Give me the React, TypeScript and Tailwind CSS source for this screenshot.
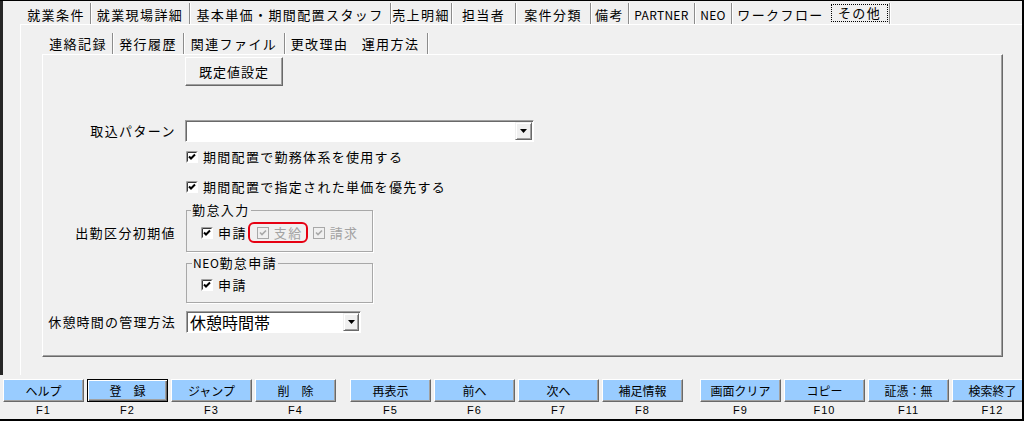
import React from 'react';

function CheckBox({ disabled = false }: { disabled?: boolean }) {
  if (disabled) {
    return (
      <svg width="12" height="12" viewBox="0 0 12 12" className="block shrink-0">
        <rect x="0.5" y="0.5" width="11" height="11" fill="#f0f0f0" stroke="#a8a8a8" />
        <path d="M3 5.5 L5 7.5 L9 3.5" fill="none" stroke="#a8a8a8" strokeWidth="1.6" />
      </svg>
    );
  }
  return (
    <svg width="12" height="12" viewBox="0 0 12 12" className="block shrink-0">
      <rect x="0" y="0" width="12" height="12" fill="#ffffff" />
      <path d="M0.5 11.5 H11.5 V0.5" fill="none" stroke="#ffffff" />
      <path d="M0.5 11.5 V0.5 H11.5" fill="none" stroke="#a0a0a0" />
      <path d="M1.5 10.5 V1.5 H10.5" fill="none" stroke="#3a3a3a" />
      <path d="M3 5.5 L5 7.5 L9 3.5" fill="none" stroke="#000000" strokeWidth="2" />
    </svg>
  );
}

function DropArrow({ w }: { w: string }) {
  return (
    <div
      className={`${w} h-full shrink-0 bg-[#f0f0f0] border border-t-[#f0f0f0] border-l-[#f0f0f0] border-r-[#696969] border-b-[#696969] shadow-[inset_1px_1px_0_#ffffff,inset_-1px_-1px_0_#a0a0a0] flex items-center justify-center`}
    >
      <svg width="7" height="4" viewBox="0 0 7 4" className="block">
        <polygon points="0,0 7,0 3.5,4" fill="#000000" />
      </svg>
    </div>
  );
}

const topTabs: { label: string; w: string; latin?: boolean; noSep?: boolean }[] = [
  { label: '就業条件', w: 'w-[69px]' },
  { label: '就業現場詳細', w: 'w-[99px]' },
  { label: '基本単価・期間配置スタッフ', w: 'w-[201px]' },
  { label: '売上明細', w: 'w-[61px]' },
  { label: '担当者', w: 'w-[64px]' },
  { label: '案件分類', w: 'w-[75px]' },
  { label: '備考', w: 'w-[38px]' },
  { label: 'PARTNER', w: 'w-[66px]', latin: true },
  { label: 'NEO', w: 'w-[37px]', latin: true },
  { label: 'ワークフロー', w: 'w-[97px]', noSep: true },
];

const innerTabs: { label: string; w: string; noSep?: boolean }[] = [
  { label: '連絡記録', w: 'w-[69px]' },
  { label: '発行履歴', w: 'w-[71px]' },
  { label: '関連ファイル', w: 'w-[101px]' },
  { label: '更改理由', w: 'w-[69px]', noSep: true },
  { label: '運用方法', w: 'w-[74px]' },
];

type Btn = { label: string; key: string; def?: boolean };
const groups: { ml: string; items: Btn[] }[] = [
  {
    ml: 'ml-0',
    items: [
      { label: 'ヘルプ', key: 'F1' },
      { label: '登　録', key: 'F2', def: true },
      { label: 'ジャンプ', key: 'F3' },
      { label: '削　除', key: 'F4' },
    ],
  },
  {
    ml: 'ml-[14px]',
    items: [
      { label: '再表示', key: 'F5' },
      { label: '前へ', key: 'F6' },
      { label: '次へ', key: 'F7' },
      { label: '補足情報', key: 'F8' },
    ],
  },
  {
    ml: 'ml-[17px]',
    items: [
      { label: '画面クリア', key: 'F9' },
      { label: 'コピー', key: 'F10' },
      { label: '証憑：無', key: 'F11' },
      { label: '検索終了', key: 'F12' },
    ],
  },
];

export default function App() {
  return (
    <div className="w-[1024px] h-[421px] overflow-hidden bg-[#f0f0f0] border-t border-r-2 border-b-2 border-black flex flex-col text-black font-['Noto_Sans_CJK_JP','Noto_Sans',sans-serif] text-[13px] leading-[18px]">
      {/* upper region */}
      <div className="h-[374px] shrink-0 border-l-[3px] border-[#262626] flex flex-col">
        {/* top tabs */}
        <div className="h-[23px] shrink-0 flex items-end pl-[19px]">
          {topTabs.map((t) => (
            <div
              key={t.label}
              className={`${t.w} h-[21px] pt-[2px] flex items-center justify-center ${
                t.noSep ? '' : 'border-r border-[#8c8c8c] shadow-[1px_0_0_#ffffff]'
              } ${t.latin ? 'text-[12px] tracking-[0.3px]' : 'tracking-[1.4px]'}`}
            >
              {t.label}
            </div>
          ))}
          <div className="w-[61px] h-[21px] flex items-start justify-start pl-[2px] pt-[1px] border-r border-[#8c8c8c] shadow-[1px_0_0_#ffffff]">
            <div className="w-[57px] h-[18px] border border-dotted border-black flex items-center justify-center tracking-[1.4px]">
              その他
            </div>
          </div>
        </div>

        {/* outer panel */}
        <div className="flex-1 ml-[17px] border-t border-l border-white flex flex-col">
          {/* inner tabs */}
          <div className="h-[29px] shrink-0 flex items-end pl-[23px]">
            {innerTabs.map((t) => (
              <div
                key={t.label}
                className={`${t.w} h-[21px] flex items-center justify-center tracking-[1.4px] ${
                  t.noSep ? '' : 'border-r border-[#8c8c8c] shadow-[1px_0_0_#ffffff]'
                }`}
              >
                {t.label}
              </div>
            ))}
          </div>

          {/* inner panel */}
          <div className="ml-[21px] w-[961px] h-[303px] shrink-0 border-t border-l border-white border-r border-b border-r-[#696969] border-b-[#696969] shadow-[inset_-1px_-1px_0_#a0a0a0] flex flex-col">
            {/* default setting button */}
            <div className="mt-[2px] h-[29px] pl-[142px] flex">
              <div className="w-[98px] h-[29px] bg-[#f0f0f0] border border-t-white border-l-white border-r-[#696969] border-b-[#696969] shadow-[inset_-1px_-1px_0_#a0a0a0] flex items-center justify-center tracking-[1px]">
                既定値設定
              </div>
            </div>

            {/* import pattern */}
            <div className="mt-[34px] h-[22px] flex">
              <div className="w-[133px] text-right leading-[22px] tracking-[1.4px]">取込パターン</div>
              <div className="ml-[9px] w-[349px] h-[22px] bg-white border border-t-[#a0a0a0] border-l-[#a0a0a0] border-r-white border-b-white shadow-[inset_1px_1px_0_#696969] flex justify-end pr-[1px] pt-[1px] pb-[1px]">
                <DropArrow w="w-[17px]" />
              </div>
            </div>

            {/* checkbox 1 */}
            <div className="mt-[6px] h-[18px] flex items-center pl-[143px] gap-[5px]">
              <CheckBox />
              <span className="tracking-[1.3px]">期間配置で勤務体系を使用する</span>
            </div>

            {/* checkbox 2 */}
            <div className="mt-[12px] h-[18px] flex items-center pl-[143px] gap-[5px]">
              <CheckBox />
              <span className="tracking-[1.3px]">期間配置で指定された単価を優先する</span>
            </div>

            {/* attendance input group */}
            <div className="mt-[7px] flex">
              <div className="w-[133px] text-right pt-[21px] tracking-[1.4px]">出勤区分初期値</div>
              <fieldset className="ml-[10px] w-[187px] h-[49px] border border-[#a8a8a8] shadow-[1px_1px_0_#ffffff]">
                <legend className="ml-[4px] px-[1px] leading-[14px] tracking-[1.4px]">勤怠入力</legend>
                <div className="mt-[7px] h-[18px] pl-[14px] flex items-center gap-[10px]">
                  <div className="flex items-center gap-[5px]">
                    <CheckBox />
                    <span className="tracking-[1.4px]">申請</span>
                  </div>
                  <div className="relative flex items-center gap-[5px]">
                    <CheckBox disabled />
                    <span className="tracking-[1.4px] text-[#a3a3a3]">支給</span>
                    <span className="absolute left-[-9px] right-[-5px] top-[-2px] bottom-[-1px] rounded-[6px] border-2 border-[#e60012]" />
                  </div>
                  <div className="flex items-center gap-[5px]">
                    <CheckBox disabled />
                    <span className="tracking-[1.4px] text-[#a3a3a3]">請求</span>
                  </div>
                </div>
              </fieldset>
            </div>

            {/* NEO group */}
            <div className="mt-[4px] flex">
              <div className="w-[133px]" />
              <fieldset className="ml-[10px] w-[187px] h-[47px] border border-[#a8a8a8] shadow-[1px_1px_0_#ffffff]">
                <legend className="ml-[5px] px-[1px] leading-[14px] tracking-[0.6px]">
                  <span className="text-[12px]">NEO</span>
                  <span className="tracking-[1.4px]">勤怠申請</span>
                </legend>
                <div className="mt-[6px] h-[18px] pl-[14px] flex items-center gap-[5px]">
                  <CheckBox />
                  <span className="tracking-[1.4px]">申請</span>
                </div>
              </fieldset>
            </div>

            {/* break time */}
            <div className="mt-[8px] h-[22px] flex">
              <div className="w-[133px] text-right leading-[22px] tracking-[1.2px]">休憩時間の管理方法</div>
              <div className="ml-[10px] w-[175px] h-[22px] bg-white border border-t-[#a0a0a0] border-l-[#a0a0a0] border-r-white border-b-white shadow-[inset_1px_1px_0_#696969] flex items-stretch pt-[1px] pb-[1px] pr-[1px]">
                <div className="flex-1 pl-[3px] text-[16px] leading-[18px]">休憩時間帯</div>
                <DropArrow w="w-[16px]" />
              </div>
            </div>
          </div>
        </div>
      </div>

      {/* function key bar */}
      <div className="flex-1 flex pl-[3px] pt-[4px]">
        {groups.map((g, gi) => (
          <div key={gi} className={`${g.ml} flex gap-[3px] shrink-0`}>
            {g.items.map((b) => (
              <div key={b.key} className="w-[81px] shrink-0 flex flex-col items-center">
                <div
                  className={`w-[81px] h-[23px] bg-[#99ccff] flex items-center justify-center text-[12px] leading-[16px] ${
                    b.def
                      ? 'border border-black shadow-[inset_1px_1px_0_#ffffff,inset_-1px_-1px_0_#696969,inset_-2px_-2px_0_#a0a0a0]'
                      : 'border border-t-white border-l-white border-r-[#696969] border-b-[#696969] shadow-[inset_-1px_-1px_0_#a0a0a0]'
                  }`}
                >
                  {b.label}
                </div>
                <div className="h-[16px] leading-[16px] text-[11px] tracking-[1px] font-['Liberation_Sans',sans-serif]">
                  {b.key}
                </div>
              </div>
            ))}
          </div>
        ))}
      </div>
    </div>
  );
}
